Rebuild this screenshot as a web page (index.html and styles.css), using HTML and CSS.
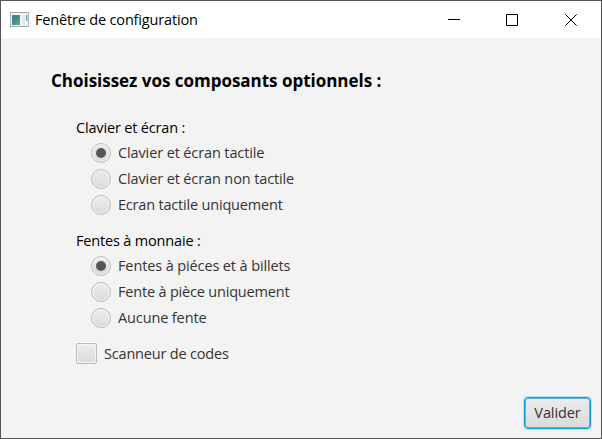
FILE: index.html
```html
<!DOCTYPE html>
<html lang="fr">
<head>
<meta charset="utf-8">
<title>Fenêtre de configuration</title>
<link rel="stylesheet" href="styles.css">
</head>
<body>
<div class="window">
  <header class="titlebar">
    <svg class="app-icon" width="19" height="16" viewBox="0 0 19 16">
      <defs><linearGradient id="pane" x1="0" y1="0" x2="1" y2="1"><stop offset="0" stop-color="#4779a0"/><stop offset=".5" stop-color="#458b8c"/><stop offset="1" stop-color="#65b27c"/></linearGradient></defs>
      <rect x=".5" y=".5" width="18" height="14" fill="#f4f4f4" stroke="#b5b8bb"/>
      <path d="M0 .5h19M0 14.5h19" stroke="#a1a6ab"/>
      <rect x="2" y="3" width="8" height="10" fill="url(#pane)"/>
      <rect x="12" y="3" width="3" height="10" fill="#e6e8ea"/>
      <rect x="16" y="3" width="1.5" height="6" fill="#70a9a5"/>
    </svg>
    <h1 class="caption">Fenêtre de configuration</h1>
    <div class="controls">
      <svg width="12" height="12" viewBox="0 0 12 12"><path d="M0 5.5h12"/></svg>
      <svg width="12" height="12" viewBox="0 0 12 12"><path d="M.5.5h11v11H.5z"/></svg>
      <svg class="close" width="12" height="12" viewBox="0 0 12 12"><path d="M.3.3l11.4 11.4M11.7.3L.3 11.7"/></svg>
    </div>
  </header>
  <main class="content">
    <h2 class="heading"><span>Choisissez vos composants optionnels :</span></h2>
    <section class="group">
      <h3 class="label"><span>Clavier et écran :</span></h3>
      <div class="option"><i class="radio selected"></i><span>Clavier et écran tactile</span></div>
      <div class="option"><i class="radio"></i><span>Clavier et écran non tactile</span></div>
      <div class="option snug"><i class="radio"></i><span>Ecran tactile uniquement</span></div>
    </section>
    <section class="group">
      <h3 class="label"><span>Fentes à monnaie :</span></h3>
      <div class="option"><i class="radio selected"></i><span>Fentes à piéces et à billets</span></div>
      <div class="option snug"><i class="radio"></i><span>Fente à pièce uniquement</span></div>
      <div class="option"><i class="radio"></i><span>Aucune fente</span></div>
    </section>
    <div class="scanner"><i class="checkbox"></i><span>Scanneur de codes</span></div>
    <div class="actions"><button class="submit">Valider</button></div>
  </main>
</div>
</body>
</html>
```
FILE: styles.css
```css
* { box-sizing: border-box; }
body { margin: 0; font: 14.5px/20px "Open Sans", "Noto Sans", sans-serif; color: #333; }
h1, h2, h3 { margin: 0; font: inherit; color: #000; white-space: nowrap; }
.window { width: 602px; height: 439px; border: 1px solid #555456; background: #f3f3f3; display: flex; flex-direction: column; }
.titlebar { height: 37px; flex: none; background: #fff; display: flex; align-items: center; padding: 0 24px 0 9px; }
.app-icon { flex: none; }
.caption { margin-left: 6px; font-size: 14.5px; letter-spacing: -.17px; }
.controls { margin-left: auto; display: flex; gap: 46px; }
.controls svg { fill: none; stroke: #000; stroke-width: 1; }
.controls .close { margin-left: 1px; }
.content { flex: 1; display: flex; flex-direction: column; padding: 31px 10px 9px 75px; }
.heading { margin-left: -25px; font-size: 17px; line-height: 24px; font-weight: 700; letter-spacing: -.02px; margin-bottom: 25px; }
.group { margin-bottom: 13px; }
.group + .group { margin-bottom: 12px; }
.label { height: 22px; line-height: 20px; letter-spacing: -.17px; }
.option { display: flex; align-items: center; height: 26px; padding-left: 15px; gap: 7px; letter-spacing: -.12px; }
.option.snug { letter-spacing: -.19px; }
.option span, .scanner span { white-space: nowrap; }
.radio { width: 20px; height: 20px; flex: none; border-radius: 50%; border: 1px solid #bcbcbc; background: linear-gradient(#eee, #dadada); box-shadow: inset 0 0 0 1px #f5f5f5; display: grid; place-items: center; }
.selected::after { content: ""; width: 10px; height: 10px; border-radius: 50%; background: #555; }
.scanner { display: flex; align-items: center; height: 21px; gap: 7px; letter-spacing: -.19px; }
.checkbox { width: 21px; height: 21px; border: 1px solid #bcbcbc; border-radius: 2px; background: linear-gradient(#eee, #dadada); box-shadow: inset 0 0 0 1px #f5f5f5; }
.actions { margin-top: auto; display: flex; justify-content: flex-end; }
.submit { width: 67px; height: 32px; padding: 0; border: 1px solid #0f9fd5; border-radius: 4px; background: linear-gradient(#ececec, #dadada); font: inherit; color: #333; letter-spacing: -.1px; box-shadow: 0 0 0 1px #b9e2f1, inset 0 0 0 1px #52b8dd; }
```
